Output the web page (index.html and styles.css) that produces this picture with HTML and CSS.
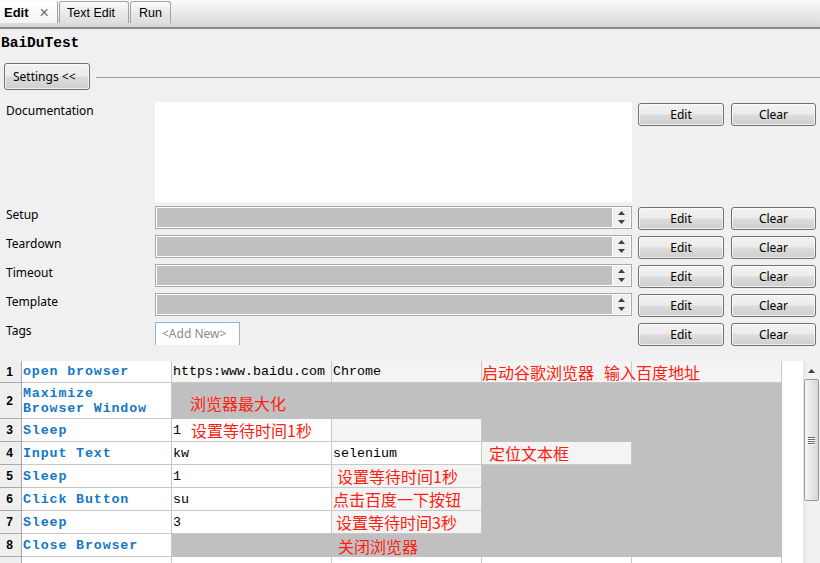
FILE: index.html
```html
<!DOCTYPE html>
<html>
<head>
<meta charset="utf-8">
<link rel="stylesheet" href="styles.css">
</head>
<body>
<div class="tabbar">
  <div class="tab tab-active"><span>Edit</span><span class="tab-close">×</span></div>
  <div class="tab tab-text">Text Edit</div>
  <div class="tab tab-run">Run</div>
</div>

<div class="title">BaiDuTest</div>

<div class="settings-head">
  <button class="btn btn-settings">Settings &lt;&lt;</button>
  <div class="rule"></div>
</div>

<div class="settings">
  <div class="label">Documentation</div>
  <div class="doc"></div>
  <button class="btn btn-side">Edit</button>
  <button class="btn btn-side btn-clear">Clear</button>

  <div class="label">Setup</div>
  <div class="field"><div class="fill"></div><div class="spin"><svg width="7" height="4" viewBox="0 0 7 4"><path d="M0 4 L3.5 0 L7 4Z" fill="#404040"/></svg><svg width="7" height="4" viewBox="0 0 7 4"><path d="M0 0 L3.5 4 L7 0Z" fill="#404040"/></svg></div></div>
  <button class="btn btn-side">Edit</button>
  <button class="btn btn-side btn-clear">Clear</button>

  <div class="label">Teardown</div>
  <div class="field"><div class="fill"></div><div class="spin"><svg width="7" height="4" viewBox="0 0 7 4"><path d="M0 4 L3.5 0 L7 4Z" fill="#404040"/></svg><svg width="7" height="4" viewBox="0 0 7 4"><path d="M0 0 L3.5 4 L7 0Z" fill="#404040"/></svg></div></div>
  <button class="btn btn-side">Edit</button>
  <button class="btn btn-side btn-clear">Clear</button>

  <div class="label">Timeout</div>
  <div class="field"><div class="fill"></div><div class="spin"><svg width="7" height="4" viewBox="0 0 7 4"><path d="M0 4 L3.5 0 L7 4Z" fill="#404040"/></svg><svg width="7" height="4" viewBox="0 0 7 4"><path d="M0 0 L3.5 4 L7 0Z" fill="#404040"/></svg></div></div>
  <button class="btn btn-side">Edit</button>
  <button class="btn btn-side btn-clear">Clear</button>

  <div class="label">Template</div>
  <div class="field"><div class="fill"></div><div class="spin"><svg width="7" height="4" viewBox="0 0 7 4"><path d="M0 4 L3.5 0 L7 4Z" fill="#404040"/></svg><svg width="7" height="4" viewBox="0 0 7 4"><path d="M0 0 L3.5 4 L7 0Z" fill="#404040"/></svg></div></div>
  <button class="btn btn-side">Edit</button>
  <button class="btn btn-side btn-clear">Clear</button>

  <div class="label">Tags</div>
  <div class="tags"><span class="addnew">&lt;Add New&gt;</span></div>
  <button class="btn btn-side">Edit</button>
  <button class="btn btn-side btn-clear">Clear</button>
</div>

<div class="table-wrap">
  <div class="grid">
    <!-- row 1 -->
    <div class="num">1</div>
    <div class="cell kw">open browser</div>
    <div class="cell arg light">https:www.baidu.com</div>
    <div class="cell arg light">Chrome</div>
    <div class="cell light span2 split c-first"><span class="cm">启动谷歌浏览器<span class="gap"></span>输入百度地址</span></div>
    <!-- row 2 -->
    <div class="num">2</div>
    <div class="cell kw kw-wrap">Maximize<br>Browser Window</div>
    <div class="cell gray span4 c-r2"><span class="cm">浏览器最大化</span></div>
    <!-- row 3 -->
    <div class="num">3</div>
    <div class="cell kw">Sleep</div>
    <div class="cell arg"><span>1</span><span class="cm c-r3">设置等待时间1秒</span></div>
    <div class="cell light"></div>
    <div class="cell gray span2"></div>
    <!-- row 4 -->
    <div class="num">4</div>
    <div class="cell kw">Input Text</div>
    <div class="cell arg">kw</div>
    <div class="cell arg">selenium</div>
    <div class="cell light c-r4"><span class="cm">定位文本框</span></div>
    <div class="cell gray"></div>
    <!-- row 5 -->
    <div class="num">5</div>
    <div class="cell kw">Sleep</div>
    <div class="cell arg">1</div>
    <div class="cell light c-r5"><span class="cm">设置等待时间1秒</span></div>
    <div class="cell gray span2"></div>
    <!-- row 6 -->
    <div class="num">6</div>
    <div class="cell kw">Click Button</div>
    <div class="cell arg">su</div>
    <div class="cell light c-r6"><span class="cm">点击百度一下按钮</span></div>
    <div class="cell gray span2"></div>
    <!-- row 7 -->
    <div class="num">7</div>
    <div class="cell kw">Sleep</div>
    <div class="cell arg">3</div>
    <div class="cell light c-r7"><span class="cm">设置等待时间3秒</span></div>
    <div class="cell gray span2"></div>
    <!-- row 8 -->
    <div class="num">8</div>
    <div class="cell kw">Close Browser</div>
    <div class="cell gray span4 c-r8"><span class="cm">关闭浏览器</span></div>
    <!-- row 9 (partly visible) -->
    <div class="num"></div>
    <div class="cell"></div>
    <div class="cell"></div>
    <div class="cell"></div>
    <div class="cell"></div>
    <div class="cell"></div>
  </div>
  <div class="blank"></div>
  <div class="scrollbar">
    <div class="sb-up"><svg width="7" height="4" viewBox="0 0 7 4"><path d="M0 4 L3.5 0 L7 4Z" fill="#3c3c3c"/></svg></div>
    <div class="sb-thumb"><div class="grip"><i></i><i></i><i></i><i></i></div></div>
  </div>
</div>
</body>
</html>
```

FILE: styles.css
```css
* { box-sizing: border-box; }
html, body { margin: 0; padding: 0; }
body {
  width: 820px;
  height: 563px;
  overflow: hidden;
  background: #f0f0f0;
  font-family: "Noto Sans", "Open Sans", sans-serif;
  font-size: 12px;
  color: #000;
}

/* tabs */
.tabbar {
  height: 29px;
  display: flex;
  align-items: flex-start;
  padding-top: 1px;
  background: linear-gradient(#f9f9f9, #e8e8e8 55%, #d6d6d6);
  border-bottom: 2px solid #8a8a8a;
}
.tab {
  height: 22px;
  display: flex;
  align-items: center;
  font-family: "Liberation Sans", Arial, sans-serif;
  font-size: 12.5px;
  border: 1px solid #a3a3a3;
  border-bottom: none;
  border-radius: 3px 3px 0 0;
  background: linear-gradient(#fbfbfb, #e9e9e9 50%, #dedede);
  margin-left: 1px;
}
.tab-active {
  width: 58px;
  margin-left: 0;
  padding-left: 4px;
  font-weight: bold;
  font-size: 13px;
  border-top: none;
  border-left: none;
  border-radius: 0 3px 0 0;
  background: linear-gradient(#ffffff, #f4f4f4);
}
.tab-close {
  font-weight: normal;
  color: #6c6c6c;
  font-size: 16px;
  margin-left: 11px;
  margin-top: 2px;
}
.tab-text { width: 70px; padding-left: 7px; }
.tab-run { width: 41px; padding-left: 8px; }

/* title */
.title {
  font-family: "Liberation Mono", "Courier New", monospace;
  font-weight: bold;
  font-size: 14.5px;
  line-height: 20px;
  margin-top: 3px;
  padding-top: 1px;
  padding-left: 1px;
  height: 23px;
}

/* buttons */
.btn {
  font-family: "Noto Sans", "Open Sans", sans-serif;
  font-size: 12px;
  color: #000;
  border: 1px solid #707070;
  border-radius: 3px;
  background: linear-gradient(#f3f3f3 0%, #ebebeb 48%, #dcdcdc 52%, #cfcfcf 100%);
  box-shadow: inset 0 0 0 1px rgba(255,255,255,0.7);
  padding: 0;
  margin: 0;
}

.settings-head {
  display: flex;
  align-items: center;
  gap: 6px;
  padding-left: 4px;
  margin-top: 8px;
}
.btn-settings {
  width: 86px;
  height: 27px;
  text-align: left;
  padding-left: 8px;
}
.rule {
  flex: 1;
  height: 1px;
  background: #a0a0a0;
  margin-top: 1px;
}

/* settings grid */
.settings {
  display: grid;
  grid-template-columns: 149px 477px 86px 86px;
  grid-template-rows: 98px repeat(5, 23px);
  column-gap: 6px;
  row-gap: 6px;
  margin-top: 12px;
}
.label {
  padding-left: 6px;
  line-height: 17px;
  padding-top: 0;
}
.doc {
  background: #fff;
  height: 100px;
}
.btn-side {
  height: 23px;
  margin-top: 1px;
  align-self: start;
}
.btn-clear { margin-left: 1px; }

.field {
  display: flex;
  height: 23px;
  border: 1px solid #a8a8a8;
  background: #fff;
  padding: 1px;
}
.fill {
  flex: 1;
  background: #c0c0c0;
}
.spin {
  width: 17px;
  margin-left: 1px;
  background: #efefef;
  display: flex;
  flex-direction: column;
  align-items: center;
  justify-content: center;
  gap: 5px;
}
.spin svg { display: block; }

.tags {
  height: 23px;
  width: 85px;
  background: #fff;
  border: 1px solid #8ab6e2;
  border-bottom: none;
  padding-left: 6px;
  line-height: 21px;
}
.addnew { color: #8a8a8a; }

/* table */
.table-wrap {
  display: flex;
  margin-top: 16px;
  height: 210px;
}
.grid {
  display: grid;
  grid-template-columns: 22px 150px 160px 150px 150px 150px;
  grid-template-rows: 22px 36px repeat(7, 23px);
  width: 782px;
  flex: none;
}
.num {
  background: #efefef;
  border-right: 1px solid #a8a8a8;
  border-bottom: 1px solid #a8a8a8;
  font-family: "Liberation Sans", Arial, sans-serif;
  font-weight: bold;
  font-size: 12px;
  display: flex;
  align-items: center;
  justify-content: center;
  padding-right: 2px;
}
.cell {
  background: #fff;
  border-right: 1px solid #c8c8c8;
  border-bottom: 1px solid #c8c8c8;
  display: flex;
  align-items: center;
  white-space: nowrap;
  padding-left: 1px;
  font-family: "Liberation Mono", "Courier New", monospace;
  font-size: 13.33px;
}
.kw {
  color: #1677c4;
  font-weight: bold;
  letter-spacing: 0.85px;
}
.kw-wrap {
  white-space: normal;
  line-height: 15px;
  padding-top: 1px;
}
.arg { color: #000; }
.light { background: #f4f4f4; }
.gray { background: #c0c0c0; border-color: #c0c0c0; }
.span2 { grid-column: span 2; }
.span4 { grid-column: span 4; }
.split {
  background: linear-gradient(to right, #f4f4f4 149px, #c8c8c8 149px, #c8c8c8 150px, #f4f4f4 150px);
}

.cm {
  font-family: "Noto Sans CJK SC", "Noto Sans", sans-serif;
  font-size: 16px;
  line-height: 18px;
  color: #ff2010;
  letter-spacing: 0;
  font-weight: normal;
}
.gap { display: inline-block; width: 10px; }
.c-first { padding-left: 0; }
.c-r2 { padding-left: 18px; padding-top: 4px; }
.c-r3 { margin-left: 10px; }
.c-r4 { padding-left: 7px; }
.c-r5 { padding-left: 5px; }
.c-r6 { padding-left: 1px; }
.c-r7 { padding-left: 4px; }
.c-r8 { padding-left: 166px; padding-top: 2px; }

.blank {
  width: 21px;
  background: #fff;
  flex: none;
}
.scrollbar {
  width: 17px;
  flex: none;
  background: linear-gradient(to right, #e6e6e6, #f2f2f2 40%, #f0f0f0);
  display: flex;
  flex-direction: column;
  align-items: center;
}
.sb-up {
  height: 18px;
  display: flex;
  align-items: center;
  justify-content: center;
  padding-top: 1px;
}
.sb-thumb {
  width: 15px;
  height: 122px;
  border: 1px solid #9a9a9a;
  border-radius: 2px;
  background: linear-gradient(to right, #f6f6f6, #e6e6e6 50%, #d8d8d8);
  display: flex;
  align-items: center;
  justify-content: center;
}
.grip {
  display: flex;
  flex-direction: column;
  gap: 1px;
}
.grip i {
  display: block;
  width: 7px;
  height: 1px;
  background: #6a6a6a;
  box-shadow: 0 1px 0 #fff;
}
```
